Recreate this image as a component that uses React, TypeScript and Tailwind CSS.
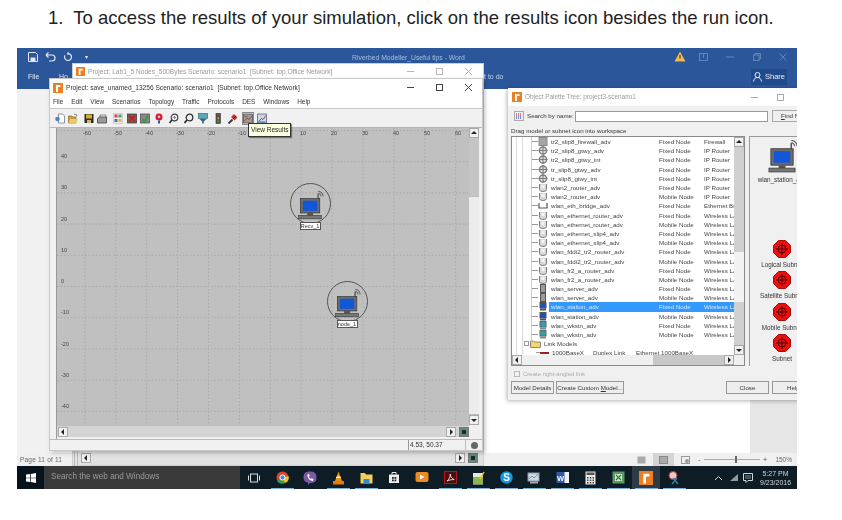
import React from "react";

type Row = [string, string, string, string];
const F = "Fixed Node";
const M = "Mobile Node";
const R = "IP Router";
const W = "Wireless LAN";
const rows: Row[] = [
  ["tr2_slip8_firewall_adv", F, "Firewall", "box"],
  ["tr2_slip8_gtwy_adv", F, R, "gear"],
  ["tr2_slip8_gtwy_int", F, R, "gear"],
  ["tr_slip8_gtwy_adv", F, R, "gear"],
  ["tr_slip8_gtwy_int", F, R, "gear"],
  ["wlan2_router_adv", F, R, "router"],
  ["wlan2_router_adv", M, R, "router"],
  ["wlan_eth_bridge_adv", F, "Ethernet Bridge", "bridge"],
  ["wlan_ethernet_router_adv", F, W, "router"],
  ["wlan_ethernet_router_adv", M, W, "router"],
  ["wlan_ethernet_slip4_adv", F, W, "router"],
  ["wlan_ethernet_slip4_adv", M, W, "router"],
  ["wlan_fddi2_tr2_router_adv", F, W, "router"],
  ["wlan_fddi2_tr2_router_adv", M, W, "router"],
  ["wlan_fr2_a_router_adv", F, W, "router"],
  ["wlan_fr2_a_router_adv", M, W, "router"],
  ["wlan_server_adv", F, W, "server"],
  ["wlan_server_adv", M, W, "server"],
  ["wlan_station_adv", F, W, "station"],
  ["wlan_station_adv", M, W, "station"],
  ["wlan_wkstn_adv", F, W, "wkstn"],
  ["wlan_wkstn_adv", M, W, "wkstn"],
];

function RowIcon({ kind }: { kind: string }) {
  const c = "#7d7d7d";
  return (
    <svg width="10" height="9" viewBox="0 0 10 9" className="shrink-0">
      {kind === "box" && <rect x="1" y="0.5" width="8" height="8" fill="#a5a5a5" stroke="#8a8a8a" />}
      {kind === "gear" && (
        <g>
          <circle cx="5" cy="4.5" r="3.6" fill="#e2e2e2" stroke={c} strokeWidth="1.5" />
          <path d="M5 0v9M0.5 4.5h9" stroke={c} strokeWidth="1.1" />
        </g>
      )}
      {kind === "router" && (
        <g>
          <path d="M1.5 1v5.5a3.5 2 0 0 0 7 0V1" fill="#d8d8d8" stroke={c} />
          <rect x="3.5" y="2" width="3" height="3" fill="#f4f4f4" />
        </g>
      )}
      {kind === "bridge" && <path d="M1 2v5h8V2" fill="#fff" stroke="#555" strokeWidth="1.2" />}
      {kind === "server" && <rect x="2.5" y="0.5" width="5" height="8" fill="#9a9a9a" stroke="#555" />}
      {kind === "station" && (
        <g>
          <rect x="2" y="0.5" width="6" height="5.5" fill="#1a52c4" stroke="#555" />
          <rect x="2" y="6.5" width="6" height="2" fill="#555" />
        </g>
      )}
      {kind === "wkstn" && (
        <g>
          <rect x="2" y="0.5" width="6" height="5.5" fill="#2f9fb0" stroke="#5a6a6a" />
          <rect x="2" y="6.5" width="6" height="2" fill="#7a8a8a" />
        </g>
      )}
    </svg>
  );
}

function Station({ w = 32 }: { w?: number }) {
  return (
    <svg width={w} height={(w * 34) / 32} viewBox="0 0 32 34" className="block">
      <path d="M25 3v7" stroke="#444" strokeWidth="1.4" />
      <path d="M25 0.5a6 6 0 0 1 6 6M25 3a3.500 3.500 0 0 1 3.500 3.500" fill="none" stroke="#666" strokeWidth="1.2" />
      <rect x="4" y="9" width="23" height="17" fill="#6b6b6b" stroke="#333" strokeWidth="0.8" />
      <rect x="7" y="11.5" width="17" height="12" fill="#1257d8" />
      <rect x="12" y="26" width="7" height="3" fill="#555" />
      <rect x="2" y="29" width="27" height="4" fill="#777" stroke="#333" strokeWidth="0.7" />
    </svg>
  );
}

function Node({ name, cls }: { name: string; cls: string }) {
  return (
    <div className={`absolute w-[42px] flex flex-col items-center ${cls}`}>
      <div className="w-[41px] h-[41px] rounded-full border border-[#555] flex items-start justify-center pt-[7px]">
        <Station w={27} />
      </div>
      <div className="-mt-[2px] w-[21px] h-[8px] bg-white border border-[#555] text-[5.5px] leading-[6px] text-center text-[#333] whitespace-nowrap overflow-hidden">
        {name}
      </div>
    </div>
  );
}

function Subnet({ label }: { label: string }) {
  return (
    <div className="flex flex-col items-center w-[64px]">
      <svg width="18" height="18" viewBox="0 0 18 18">
        <path d="M5.5 0.5h7l5 5v7l-5 5h-7l-5-5v-7z" fill="#ee0f0f" stroke="#aa0a0a" />
        <circle cx="9" cy="9" r="4" fill="none" stroke="#400" strokeWidth="1" />
        <path d="M9 3v12M3 9h12" stroke="#400" strokeWidth="0.9" />
      </svg>
      <span className="mt-[2px] text-[6.3px] leading-[10px] text-[#333] whitespace-nowrap">{label}</span>
    </div>
  );
}

function RLogo({ s = 10 }: { s?: number }) {
  return (
    <svg width={s} height={s} viewBox="0 0 10 10" className="shrink-0">
      <rect width="10" height="10" fill="#ef7d22" />
      <path d="M3 9V2h4.5v2H5v5z" fill="#fff" />
    </svg>
  );
}

function WinButtons({ color, gap = "gap-[20px]" }: { color: string; gap?: string }) {
  return (
    <div className={`flex items-center ${gap}`} style={{ color }}>
      <svg width="9" height="9" viewBox="0 0 9 9"><path d="M1 4.5h7" stroke="currentColor" /></svg>
      <svg width="9" height="9" viewBox="0 0 9 9"><rect x="1.5" y="1.5" width="6" height="6" fill="none" stroke="currentColor" /></svg>
      <svg width="9" height="9" viewBox="0 0 9 9"><path d="M1 1l7 7M8 1L1 8" stroke="currentColor" /></svg>
    </div>
  );
}

const toolGaps = [0, 3, 6, 3, 6, 4, 3, 4, 5, 5, 4, 5, 5, 5, 4];

const toolDrawings: React.ReactNode[] = [
  <g key="0"><path d="M3.500 1h4l2 2v7h-6z" fill="#fff" stroke="#778" strokeWidth="0.8" /><circle cx="2.500" cy="6" r="2.300" fill="#4a86c8" /></g>,
  <g key="1"><path d="M0.500 3h3.500l1 1h3v6h-7.500z" fill="#c8a040" stroke="#7a6020" strokeWidth="0.6" /><path d="M2 6h8l-2 4H0.500z" fill="#ecc868" /><path d="M6 1l3 1-1 1.500" fill="none" stroke="#555" strokeWidth="0.7" /></g>,
  <g key="2"><rect x="0.500" y="1" width="9" height="9" fill="#2c2c20" /><rect x="2" y="1.500" width="6" height="4" fill="#d8b030" /><rect x="3" y="7" width="4" height="3" fill="#c8b878" /></g>,
  <g key="3"><path d="M3 2h6v4H3z" fill="#e8e8e8" stroke="#666" strokeWidth="0.7" /><path d="M0.500 5.500l2-1.500h7v6h-9z" fill="#9a9a9a" stroke="#444" strokeWidth="0.8" /></g>,
  <g key="4"><rect x="0.500" y="0.500" width="9" height="10" fill="#eee" stroke="#bbb" strokeWidth="0.6" /><rect x="1.500" y="1.500" width="3" height="3" fill="#d84040" /><rect x="5.500" y="1.500" width="3" height="3" fill="#4a9a5a" /><rect x="1.500" y="6" width="3" height="3" fill="#4a6ad0" /><rect x="5.500" y="6" width="3" height="3" fill="#e0b830" /></g>,
  <g key="5"><rect x="0.500" y="1" width="9" height="9" fill="#666" stroke="#333" strokeWidth="0.7" /><path d="M2 2.500l6 6M8 2.500l-6 6" stroke="#d81818" strokeWidth="1.800" /></g>,
  <g key="6"><rect x="0.500" y="1" width="9" height="9" fill="#888" stroke="#444" strokeWidth="0.7" /><path d="M2.500 6l2 2.500 3.500-6" fill="none" stroke="#28a038" strokeWidth="1.600" /></g>,
  <g key="7"><circle cx="5" cy="4" r="3.500" fill="#d81830" /><circle cx="5" cy="3.800" r="1.300" fill="#f2c8c8" /><path d="M5 7.500v3" stroke="#2a5ab0" strokeWidth="2" /></g>,
  <g key="8"><circle cx="5.500" cy="4.500" r="3.300" fill="#eee" stroke="#444" strokeWidth="1.200" /><path d="M3 7l-2.500 3" stroke="#333" strokeWidth="1.700" /><path d="M4 4.500h3M5.500 3v3" stroke="#666" strokeWidth="0.700" /></g>,
  <g key="9"><circle cx="5.500" cy="4.500" r="3.300" fill="#eee" stroke="#333" strokeWidth="1.300" /><path d="M3 7l-2.500 3" stroke="#222" strokeWidth="1.700" /></g>,
  <g key="10"><rect x="0.500" y="0.500" width="9" height="5" fill="#58a8b8" stroke="#3a6a78" strokeWidth="0.7" /><path d="M1.500 6h7L5.800 8.500v2H4.200v-2z" fill="#2a6a88" /></g>,
  <g key="11"><rect x="3" y="0.500" width="4.500" height="10" fill="#555" stroke="#333" strokeWidth="0.6" /><circle cx="5.200" cy="2.500" r="1" fill="#c03030" /><circle cx="5.200" cy="5.300" r="1" fill="#d0a020" /><circle cx="5.200" cy="8.200" r="1" fill="#38a048" /></g>,
  <g key="12"><path d="M0.500 10.500l4-4" stroke="#333" strokeWidth="1.800" /><path d="M3 4l3-3 3.500 3.500-3 3z" fill="#c83030" /><path d="M5 6l3-3" stroke="#222" strokeWidth="0.900" /></g>,
  <g key="13"><rect x="0.500" y="1" width="9" height="9" fill="#9a9a9a" stroke="#444" strokeWidth="0.7" /><path d="M1.500 8l2.500-3 2 1.500L9 3" fill="none" stroke="#c83a3a" strokeWidth="1" /><path d="M1.500 3.500h3" stroke="#555" strokeWidth="0.700" /></g>,
  <g key="14"><rect x="0.500" y="1" width="9" height="9" fill="#c8d8e8" stroke="#557" strokeWidth="0.7" /><path d="M1.500 8.500l3-3 1.500 1 3-4" fill="none" stroke="#c83a3a" strokeWidth="1" /><path d="M1.500 9h7" stroke="#2a7ab0" strokeWidth="1" /></g>,
];

function ToolIcon({ i }: { i: number }) {
  const hi = i === 13;
  return (
    <div className={`relative shrink-0 ${hi ? "outline outline-1 outline-[#8a8a8a]" : ""}`} style={{ marginLeft: toolGaps[i] }}>
      <svg width="10" height="11" viewBox="0 0 10 11" className="block">{toolDrawings[i]}</svg>
    </div>
  );
}

function Arrow({ d, cls = "" }: { d: "u" | "d" | "l" | "r"; cls?: string }) {
  const p = { u: "M1 5l3-3 3 3z", d: "M1 3l3 3 3-3z", l: "M5 1L2 4l3 3z", r: "M3 1l3 3-3 3z" }[d];
  return (
    <div className={`w-[10px] h-[10px] bg-[#f0f0f0] border border-[#a8a8a8] flex items-center justify-center shrink-0 ${cls}`}>
      <svg width="8" height="8" viewBox="0 0 8 8"><path d={p} fill="#222" /></svg>
    </div>
  );
}

function GreenBtn() {
  return (
    <div className="w-[10px] h-[10px] bg-[#5f8f70] border border-[#777] flex items-center justify-center shrink-0">
      <div className="w-[4px] h-[4px] bg-[#224]" />
    </div>
  );
}

const taskIcons: { under: boolean; hi?: boolean; el: React.ReactNode }[] = [
  { under: false, el: <svg width="12" height="10" viewBox="0 0 12 10"><rect x="2.5" y="1" width="7" height="8" fill="none" stroke="#ddd" /><path d="M0.5 2.5v5M11.5 2.5v5" stroke="#ddd" /></svg> },
  { under: true, el: <svg width="13" height="13" viewBox="0 0 13 13"><circle cx="6.5" cy="6.5" r="6" fill="#d9452f" /><path d="M6.5 6.5L1 10a6 6 0 0 0 8 2z" fill="#3a9a48" /><path d="M6.5 6.5L12.5 5a6 6 0 0 1-3.5 7z" fill="#f4c20d" /><circle cx="6.5" cy="6.5" r="2.6" fill="#4a8af0" stroke="#fff" /></svg> },
  { under: false, el: <svg width="14" height="14" viewBox="0 0 14 14"><path d="M7 0.5C11 0.5 13.5 2 13.5 6.5S11 12 7 12l-2 2v-2.3C2 11 0.5 9.5 0.5 6.5 0.5 2 3 0.5 7 0.5z" fill="#7a5aa8" /><path d="M4.5 3.5c0 4 2 6 5.5 6.5l.5-2-2-.8-.7.8C6.8 7.2 6 6.4 5.7 5.5l1-.6-.8-2z" fill="#fff" /></svg> },
  { under: true, el: <svg width="13" height="14" viewBox="0 0 13 14"><path d="M6.5 0.5L10 10H3z" fill="#f08a10" /><path d="M4.6 5.5h3.8l.6 1.6H4z" fill="#fff" /><rect x="1" y="10" width="11" height="3.5" fill="#e87a08" /></svg> },
  { under: true, el: <svg width="13" height="12" viewBox="0 0 13 12"><path d="M0.5 1h4.5l1 1.5h6.5V11.500H0.500z" fill="#f4cf5a" /><rect x="3.500" y="7" width="6" height="4.500" fill="#2a8fd0" /></svg> },
  { under: false, el: <svg width="12" height="13" viewBox="0 0 12 13"><path d="M1 3.500h10V12H1z" fill="#eee" /><path d="M4 3.500V1.500h4v2" fill="none" stroke="#eee" /><path d="M4 6h1.800v1.800H4zM6.500 6h1.800v1.800H6.500zM4 8.500h1.800v1.800H4zM6.500 8.500h1.800v1.800H6.500z" fill="#222" /></svg> },
  { under: false, el: <svg width="14" height="13" viewBox="0 0 14 13"><rect x="0.500" y="1" width="13" height="10" rx="2" fill="#ee8a20" /><path d="M5 3.500l4.500 2.500L5 8.500z" fill="#fff" /></svg> },
  { under: true, el: <svg width="13" height="13" viewBox="0 0 13 13"><rect x="0.500" y="0.500" width="12" height="12" fill="#4d0d0d" stroke="#b01818" /><path d="M3 10c2-1 3.500-5 3.200-7 .3 3 2 5 4 5.500-2 0-5 .5-7.200 1.500z" fill="none" stroke="#fff" strokeWidth="0.8" /></svg> },
  { under: true, el: <svg width="13" height="14" viewBox="0 0 13 14"><rect x="1" y="2" width="10" height="11.500" fill="#e4e8d8" /><rect x="1" y="6" width="10" height="7" fill="#8cb84a" /><path d="M8 8l4-7" stroke="#f0c020" strokeWidth="1.500" /></svg> },
  { under: true, el: <svg width="13" height="13" viewBox="0 0 13 13"><circle cx="6.500" cy="6.500" r="6.200" fill="#0a9ae6" /><text x="6.500" y="10" textAnchor="middle" fontSize="10" fontWeight="700" fill="#fff" fontFamily="Liberation Sans">S</text></svg> },
  { under: true, el: <svg width="14" height="12" viewBox="0 0 14 12"><rect x="1" y="1" width="11" height="8" fill="#cfd8e0" stroke="#8a9aa8" /><path d="M2 7l3-3 2 2 4-4" stroke="#5a9ad0" fill="none" /><rect x="3" y="9.500" width="8" height="2" fill="#aab" /></svg> },
  { under: true, el: <svg width="13" height="13" viewBox="0 0 13 13"><rect x="5" y="1" width="8" height="11" fill="#f2f2f2" /><rect x="0.500" y="1" width="8" height="11" fill="#2b5aa8" /><text x="4.500" y="9.500" textAnchor="middle" fontSize="7.500" fontWeight="700" fill="#fff" fontFamily="Liberation Sans">W</text></svg> },
  { under: true, el: <svg width="11" height="14" viewBox="0 0 11 14"><rect x="0.500" y="0.500" width="10" height="13" fill="#e8e8e8" /><rect x="1.500" y="1.500" width="8" height="2.500" fill="#555" /><path d="M2 6h1.500v1.500H2zM4.800 6h1.500v1.500H4.800zM7.500 6H9v1.500H7.500zM2 8.500h1.500V10H2zM4.800 8.500h1.500V10H4.800zM7.500 8.500H9V10H7.500zM2 11h1.500v1.500H2zM4.800 11h1.500v1.500H4.800zM7.500 11H9v1.500H7.500z" fill="#444" /></svg> },
  { under: true, el: <svg width="13" height="13" viewBox="0 0 13 13"><rect x="0.500" y="0.500" width="12" height="12" fill="#5a9a68" /><rect x="3" y="3" width="7" height="7" fill="#d8e8c8" /><path d="M4 4l5 5M9 4L4 9" stroke="#2a7a3a" strokeWidth="1.200" /></svg> },
  { under: true, hi: true, el: <RLogo s={14} /> },
  { under: true, el: <svg width="13" height="14" viewBox="0 0 13 14"><circle cx="5" cy="4.500" r="4" fill="#e8c8c8" stroke="#a33" /><path d="M5 7l5 6M9 7l-5 6" stroke="#2a8aa8" strokeWidth="1.300" /></svg> },
];

const xTicks: [string, string][] = [
  ["-60", "ml-[24px]"], ["-50", "ml-[19px]"], ["-40", "ml-[19px]"], ["-30", "ml-[19px]"], ["-20", "ml-[19px]"], ["-10", "ml-[19px]"],
  ["10", "ml-[49px]"], ["20", "ml-[19px]"], ["30", "ml-[19px]"], ["40", "ml-[19px]"], ["50", "ml-[19px]"], ["60", "ml-[19px]"],
];
const yTicks = ["40", "30", "20", "10", "0", "-10", "-20", "-30", "-40"];

const ui = "font-['Liberation_Sans',sans-serif]";

export default function App() {
  return (
    <div className={`w-[842px] h-[520px] bg-white overflow-hidden ${ui}`}>
      <div className="h-[48px] pl-[48px] pt-[8px] text-[18.5px] leading-[20px] text-[#222] whitespace-pre">
        {"1.  To access the results of your simulation, click on the results icon besides the run icon."}
      </div>

      <div className="relative ml-[17px] w-[780px] h-[441px] overflow-hidden flex flex-col blur-[0.35px]">
        {/* Word ribbon */}
        <div className="h-[41px] bg-[#2b579a] shrink-0 relative">
          <div className="flex items-center h-[18px] pl-[11px] gap-[7px] text-[#dfe7f3]">
            <svg width="10" height="10" viewBox="0 0 10 10"><path d="M0.500 0.500h7l2 2v7h-9z" fill="none" stroke="currentColor" /><rect x="2.500" y="5.500" width="5" height="4" fill="currentColor" /></svg>
            <svg width="11" height="10" viewBox="0 0 11 10"><path d="M1 3h6a2.500 2.500 0 0 1 0 6H4M1 3l2.500-2.500M1 3l2.500 2.500" fill="none" stroke="currentColor" strokeWidth="1.200" /></svg>
            <svg width="10" height="10" viewBox="0 0 10 10"><path d="M5 1.500a3.500 3.500 0 1 1-3 1.700M5 0v3" fill="none" stroke="currentColor" strokeWidth="1.200" /></svg>
            <span className="ml-[5px] text-[6px]">▾</span>
            <span className="absolute left-0 right-[-3px] top-[5px] text-center text-[6.800px] leading-[9px] text-[#a7bddd] pointer-events-none">Riverbed Modeller_Useful tips - Word</span>
            <div className="absolute top-[3px] left-[657px] flex items-center text-[#9db4d6]">
              <svg width="12" height="11" viewBox="0 0 12 11"><path d="M6 0.500l5.500 10H0.500z" fill="#f2b84a" /><rect x="5.500" y="4" width="1" height="3.500" fill="#222" /></svg>
              <svg className="ml-[13px] opacity-50" width="9" height="8" viewBox="0 0 9 8"><rect x="0.500" y="0.500" width="8" height="7" fill="none" stroke="currentColor" /><path d="M4.500 1v4" stroke="currentColor" /></svg>
              <svg className="ml-[18px] opacity-50" width="8" height="8" viewBox="0 0 8 8"><path d="M0 4h8" stroke="currentColor" /></svg>
              <svg className="ml-[19px] opacity-50" width="8" height="8" viewBox="0 0 8 8"><rect x="0.500" y="2" width="5.500" height="5.500" fill="none" stroke="currentColor" /><path d="M2 2V0.500h5.500V6H6" fill="none" stroke="currentColor" /></svg>
              <svg className="ml-[18px] opacity-50" width="8" height="8" viewBox="0 0 8 8"><path d="M0.500 0.500l7 7M7.500 0.500l-7 7" stroke="currentColor" /></svg>
            </div>
          </div>
          <span className="absolute left-[11px] top-[24px] text-[7px] leading-[9px] text-[#e3eaf5]">File</span>
          <span className="absolute left-[42px] top-[24px] text-[7px] leading-[9px] text-[#e3eaf5]">Ho</span>
          <span className="absolute left-[467px] top-[24px] text-[7px] leading-[9px] text-[#c6d4e8]">t to do</span>
          <div className="absolute left-[734px] top-[21px] w-[36px] h-[16px] bg-[#1f4a8c] flex items-center justify-center gap-[3px] text-[#e9eef7] text-[7.500px]">
            <svg width="9" height="10" viewBox="0 0 9 10"><circle cx="4.500" cy="3" r="2.500" fill="none" stroke="currentColor" /><path d="M0.500 9.500c.5-3 2-4 4-4s3.500 1 4 4" fill="none" stroke="currentColor" /></svg>
            Share
          </div>
        </div>

        {/* Word document area */}
        <div className="flex-1 flex min-h-0">
          <div className="w-[33px] bg-[#f1f1f1]" />
          <div className="flex-1 bg-white" />
          <div className="w-[47px] bg-[#e6e6e6]" />
        </div>

        {/* Word status bar */}
        <div className="h-[13px] bg-[#f0f0f0] shrink-0 flex items-center text-[#666]">
          <span className="pl-[3px] text-[6.500px] tracking-[0.2px] whitespace-nowrap">Page 11 of 11</span>
          <div className="ml-auto flex items-center gap-[8px] pr-[5px]">
            <div className="flex items-center">
              <svg width="9" height="8" viewBox="0 0 9 8"><rect x="0.500" y="0.500" width="8" height="7" fill="#aaa" /></svg>
              <div className="ml-[7px] w-[21px] h-[13px] bg-[#d4d4d4] flex items-center justify-center">
                <div className="w-[9px] h-[8px] bg-[#aaa] border border-[#888]" />
              </div>
              <svg className="ml-[7px]" width="9" height="8" viewBox="0 0 9 8"><rect x="0.500" y="0.500" width="8" height="7" fill="none" stroke="#999" /><circle cx="6" cy="5" r="2" fill="#999" /></svg>
            </div>
            <div className="flex items-center gap-[3px]">
              <span className="text-[8px] leading-[8px]">-</span>
              <div className="relative w-[56px] h-[1px] bg-[#aaa]">
                <div className="absolute left-[31px] -top-[3px] w-[2px] h-[7px] bg-[#666]" />
              </div>
              <span className="text-[8px] leading-[8px]">+</span>
            </div>
            <span className="text-[6.500px]">150%</span>
          </div>
        </div>

        {/* Taskbar */}
        <div className="h-[23px] bg-[#0e1c25] shrink-0 flex items-stretch">
          <div className="w-[27px] bg-[#06131d] flex items-center justify-center">
            <svg width="10" height="10" viewBox="0 0 10 10"><path d="M0 1.500L4.300 1v3.700H0zM5 0.900L10 0v4.700H5zM0 5.300h4.300V9L0 8.500zM5 5.300h5V10L5 9.100z" fill="#fff" /></svg>
          </div>
          <div className="w-[196px] bg-[#3a3a3a] flex items-center pl-[7px] text-[8.200px] text-[#9b9b9b] whitespace-nowrap">Search the web and Windows</div>
          {taskIcons.map((t, i) => (
            <div key={i} className={`relative w-[28px] flex items-center justify-center ${t.hi ? "bg-[#2e3b44]" : ""}`}>
              {t.el}
              {t.under && <div className="absolute bottom-0 left-[3px] w-[23px] h-[1px] bg-[#7fb2dd]" />}
            </div>
          ))}
          <div className="flex-1 flex items-center pl-[26px] text-[#cfd6da]">
            <svg width="9" height="6" viewBox="0 0 9 6"><path d="M1 5l3.500-3.500L8 5" fill="none" stroke="currentColor" /></svg>
            <svg className="ml-[6px]" width="10" height="9" viewBox="0 0 10 9"><path d="M1 8L9 1v7z" fill="#999" /></svg>
            <svg className="ml-[4px]" width="10" height="10" viewBox="0 0 10 10"><path d="M0.500 0.500h9v7H5l-2 2v-2H0.500z" fill="none" stroke="currentColor" /><path d="M2 3h6M2 5h6" stroke="currentColor" strokeWidth="0.600" /></svg>
            <div className="ml-[7px] flex flex-col items-center text-[7px] leading-[9px]">
              <span>5:27 PM</span>
              <span>9/23/2016</span>
            </div>
          </div>
        </div>

        {/* Back project window */}
        <div className="absolute left-[55px] top-[15px] w-[412px] h-[403px] bg-[#eeeeee] border border-[#cfcfcf] flex flex-col">
          <div className="h-[15px] bg-white flex items-center pl-[3px] pr-[10px] gap-[3px] text-[6.600px] text-[#9a9a9a] whitespace-nowrap">
            <RLogo s={9} />
            <span>Project: Lab1_5 Nodes_500Bytes Scenario: scenario1&nbsp;&nbsp;[Subnet: top.Office Network]</span>
            <div className="ml-auto"><WinButtons color="#b5b5b5" /></div>
          </div>
          <div className="flex-1" />
          <div className="h-[15px] bg-[#e2e2e2] flex items-center gap-[3px] pl-[1px] pr-[5px] border-t border-[#ccc]">
            <div className="w-[4px] h-full border-x border-[#bbb]" />
            <Arrow d="l" />
            <div className="flex-1" />
            <Arrow d="r" />
            <GreenBtn />
          </div>
        </div>

        {/* Front project window */}
        <div className="absolute left-[32px] top-[30px] w-[434px] h-[373px] bg-[#f0f0f0] border border-[#c9c9c9] shadow-[2px_2px_4px_rgba(0,0,0,0.25)] flex flex-col">
          <div className="h-[17px] bg-white flex items-center pl-[3px] pr-[9px] gap-[3px] text-[6.600px] text-[#333] whitespace-nowrap shrink-0">
            <RLogo s={10} />
            <span>Project: save_unamed_13256 Scenario: scenario1&nbsp;&nbsp;[Subnet: top.Office Network]</span>
            <div className="ml-auto"><WinButtons color="#444" /></div>
          </div>
          <div className="h-[12px] bg-white flex items-center gap-[8px] pl-[3px] text-[6.400px] text-[#333] shrink-0">
            {["File", "Edit", "View", "Scenarios", "Topology", "Traffic", "Protocols", "DES", "Windows", "Help"].map((m) => (
              <span key={m}>{m}</span>
            ))}
          </div>
          <div className="h-[19px] bg-[#f0f0f0] border-t border-[#c8c8c8] flex items-center pl-[5px] shrink-0">
            {toolDrawings.map((_, i) => (
              <ToolIcon key={i} i={i} />
            ))}
          </div>
          <div className="flex-1 min-h-0 flex pl-[6px] pr-[3px] border-t border-[#b5b5b5]">
            <div className="flex-1 flex flex-col min-w-0 border-l border-[#999]">
              <div className="relative h-[298px] bg-[#c0c0c0] overflow-hidden shrink-0">
                <svg className="absolute inset-0" width="414" height="298" viewBox="0 0 414 298">
                  {Array.from({ length: 14 }, (_, i) => (
                    <path key={`v${i}`} d={`M${-3 + 30.9 * i} 0V298`} stroke="#a9a9a9" strokeWidth="1" strokeDasharray="1.500 2" />
                  ))}
                  {Array.from({ length: 10 }, (_, i) => (
                    <path key={`h${i}`} d={`M0 ${2.500 + 31.200 * i}H414`} stroke="#a9a9a9" strokeWidth="1" strokeDasharray="1.500 2" />
                  ))}
                </svg>
                <div className="absolute left-0 right-0 top-[2px] flex text-[5.500px] leading-[7px] text-[#444]">
                  {xTicks.map(([t, c]) => (
                    <span key={t} className={`w-[12px] text-center ${c}`}>{t}</span>
                  ))}
                </div>
                <div className="absolute left-[4px] top-[25px] flex flex-col gap-[24.300px] text-[5.500px] leading-[7px] text-[#444]">
                  {yTicks.map((t) => (
                    <span key={t}>{t}</span>
                  ))}
                </div>
                <Node name="Recv_1" cls="left-[232px] top-[55px]" />
                <Node name="node_1" cls="left-[269px] top-[153px]" />
              </div>
              <div className="h-[11px] flex bg-[#d4d4d4] items-center shrink-0">
                <Arrow d="l" cls="ml-[1px]" />
                <div className="flex-1" />
                <Arrow d="r" cls="mr-[3px]" />
                <GreenBtn />
              </div>
              <div className="h-[2px] shrink-0" />
            </div>
            <div className="w-[10px] flex flex-col shrink-0 bg-[#d0d0d0]">
              <Arrow d="u" />
              <div className="h-[58px] bg-[#c4c4c4]" />
              <div className="flex-1 bg-[#ececec] border-y border-[#bdbdbd]" />
              <Arrow d="d" />
              <div className="h-[14px] bg-[#f0f0f0]" />
            </div>
          </div>
          <div className="h-[11px] border-t border-[#bbb] flex items-stretch shrink-0 bg-[#f0f0f0]">
            <div className="flex-1 border-r border-[#999]" />
            <div className="w-[57px] border-r border-[#bbb] text-[6.500px] leading-[10px] text-[#333] pl-[1px]">4.53, 50.37</div>
            <div className="w-[16px] flex items-center justify-center">
              <div className="w-[7px] h-[7px] rounded-full bg-[#666]" />
            </div>
          </div>
        </div>

        {/* Tooltip */}
        <div className="absolute left-[231px] top-[75px] h-[14px] px-[2px] bg-[#ffffe1] border border-[#333] text-[6.500px] leading-[12px] text-[#222] whitespace-nowrap shadow-[1px_1px_1px_rgba(0,0,0,0.4)]">
          View Results
        </div>

        {/* Object palette */}
        <div className="absolute left-[491px] top-[40px] w-[310px] h-[312px] bg-[#f0f0f0] shadow-[-1px_1px_4px_rgba(0,0,0,0.3)] flex flex-col text-[6.200px] text-[#333]">
          <div className="h-[18px] bg-white flex items-center pl-[4px] gap-[3px] text-[#9a9a9a] text-[6.400px] whitespace-nowrap shrink-0">
            <RLogo s={10} />
            <span className="w-[222px]">Object Palette Tree: project3-scenario1</span>
            <div className="flex items-center gap-[17px] text-[#aaa]">
              <svg width="9" height="9" viewBox="0 0 9 9"><path d="M1 4.500h7" stroke="currentColor" /></svg>
              <svg width="9" height="9" viewBox="0 0 9 9"><rect x="1.500" y="1.500" width="6" height="6" fill="none" stroke="currentColor" /></svg>
            </div>
          </div>
          <div className="h-[20px] flex items-center pl-[6px] shrink-0">
            <div className="w-[10px] h-[10px] bg-[#eee] border border-[#aaa] flex items-center justify-center">
              <svg width="8" height="7" viewBox="0 0 8 7"><path d="M1 1h6" stroke="#c22" strokeDasharray="1 1" /><path d="M1 3h6" stroke="#22c" strokeDasharray="1 1" /><path d="M1 5h6" stroke="#228" strokeDasharray="1 1" /></svg>
            </div>
            <span className="ml-[3px] w-[46px] whitespace-nowrap">Search by name:</span>
            <div className="ml-[2px] w-[193px] h-[11px] bg-white border border-[#999]" />
            <div className="ml-[4px] w-[40px] h-[12px] border border-[#aaa] bg-[#eee] pl-[8px] leading-[10px] whitespace-nowrap"><span className="underline">F</span>ind N</div>
          </div>
          <div className="h-[9px] pl-[3px] leading-[9px] whitespace-nowrap shrink-0">Drag model or subnet icon into workspace</div>
          <div className="h-[230px] flex pl-[3px] mt-[1px] shrink-0 gap-[4px]">
            <div className="w-[234px] border border-[#8a8a8a] bg-white flex flex-col shrink-0">
              <div className="flex-1 min-h-0 flex">
                <div className="flex-1 min-w-0 relative overflow-hidden text-[#444]">
                  <div className="absolute left-[4px] top-0 bottom-0 w-[7px] border-x border-[#ddd]" />
                  <div className="absolute left-[19px] top-0 h-[204px] w-[1px] bg-[#ccc]" />
                  {rows.map((r, i) => (
                    <div key={i} className="h-[9.200px] flex items-center leading-[9px] whitespace-nowrap pl-[20px]">
                      <div className="w-[6px] h-[1px] bg-[#999]" />
                      <RowIcon kind={r[3]} />
                      <div className={`relative ml-[1px] flex items-center h-[9.200px] flex-1 pl-[2px] min-w-0 overflow-hidden ${i === 18 ? "bg-[#3399ff] text-[#d8e8f8]" : ""}`}>
                        <span className="w-[108px] shrink-0">{r[0]}</span>
                        <span className="w-[45px] shrink-0">{r[1]}</span>
                        <span>{r[2]}</span>
                      </div>
                    </div>
                  ))}
                  <div className="h-[9.200px] flex items-center pl-[12px] leading-[9px] whitespace-nowrap">
                    <div className="w-[5px] h-[5px] border border-[#999]" />
                    <svg className="ml-[1px]" width="11" height="8" viewBox="0 0 11 8"><path d="M0.500 1h3l1 1h6v5.500h-10z" fill="#f2d95c" stroke="#888" /></svg>
                    <span className="ml-[3px]">Link Models</span>
                  </div>
                  <div className="h-[9.200px] flex items-center pl-[24px] leading-[9px] whitespace-nowrap">
                    <div className="w-[4px] h-[1px] bg-[#999]" />
                    <div className="w-[9px] h-[1.500px] bg-[#a02020]" />
                    <span className="ml-[3px] w-[41px]">1000BaseX</span>
                    <span className="w-[43px]">Duplex Link</span>
                    <span>Ethernet 1000BaseX</span>
                  </div>
                </div>
                <div className="w-[10px] flex flex-col bg-[#d0d0d0] shrink-0">
                  <Arrow d="u" />
                  <div className="h-[105px]" />
                  <div className="h-[50px] bg-[#f2f2f2]" />
                  <div className="flex-1" />
                  <Arrow d="d" />
                </div>
              </div>
              <div className="h-[10px] flex shrink-0 bg-[#c8c8c8]">
                <Arrow d="l" />
                <div className="w-[131px] bg-[#f0f0f0]" />
                <div className="flex-1" />
                <Arrow d="r" />
                <div className="w-[10px] bg-[#f0f0f0]" />
              </div>
            </div>
            <div className="flex-1 border-l border-t border-[#999] pt-[3px] flex flex-col items-start">
              <div className="w-[64px] flex flex-col items-center">
                <Station w={31} />
                <span className="mt-[2px] text-[6.300px] leading-[9px] whitespace-nowrap">wlan_station_adv</span>
              </div>
              <div className="mt-[56px] flex flex-col gap-[1.500px]">
                <Subnet label="Logical Subnet" />
                <Subnet label="Satellite Subnet" />
                <Subnet label="Mobile Subnet" />
                <Subnet label="Subnet" />
              </div>
            </div>
          </div>
          <div className="h-[14px] flex items-center pl-[6px] gap-[3px] text-[#aaa] text-[6px] whitespace-nowrap shrink-0 mt-[1px]">
            <div className="w-[6px] h-[6px] border border-[#bbb]" />
            <span>Create right-angled link</span>
          </div>
          <div className="h-[13px] flex items-stretch pl-[3px] text-[6.200px] whitespace-nowrap shrink-0">
            <div className="w-[43px] border border-[#999] bg-[#eee] text-center leading-[11px]">Model Details</div>
            <div className="ml-[2px] w-[68px] border border-[#999] bg-[#eee] text-center leading-[11px]">Create Custom <span className="underline">M</span>odel...</div>
            <div className="ml-[102px] w-[43px] border border-[#999] bg-[#eee] text-center leading-[11px]">Close</div>
            <div className="ml-[3px] w-[40px] border border-[#999] bg-[#eee] pl-[14px] leading-[11px]">Help</div>
          </div>
        </div>
      </div>
    </div>
  );
}
